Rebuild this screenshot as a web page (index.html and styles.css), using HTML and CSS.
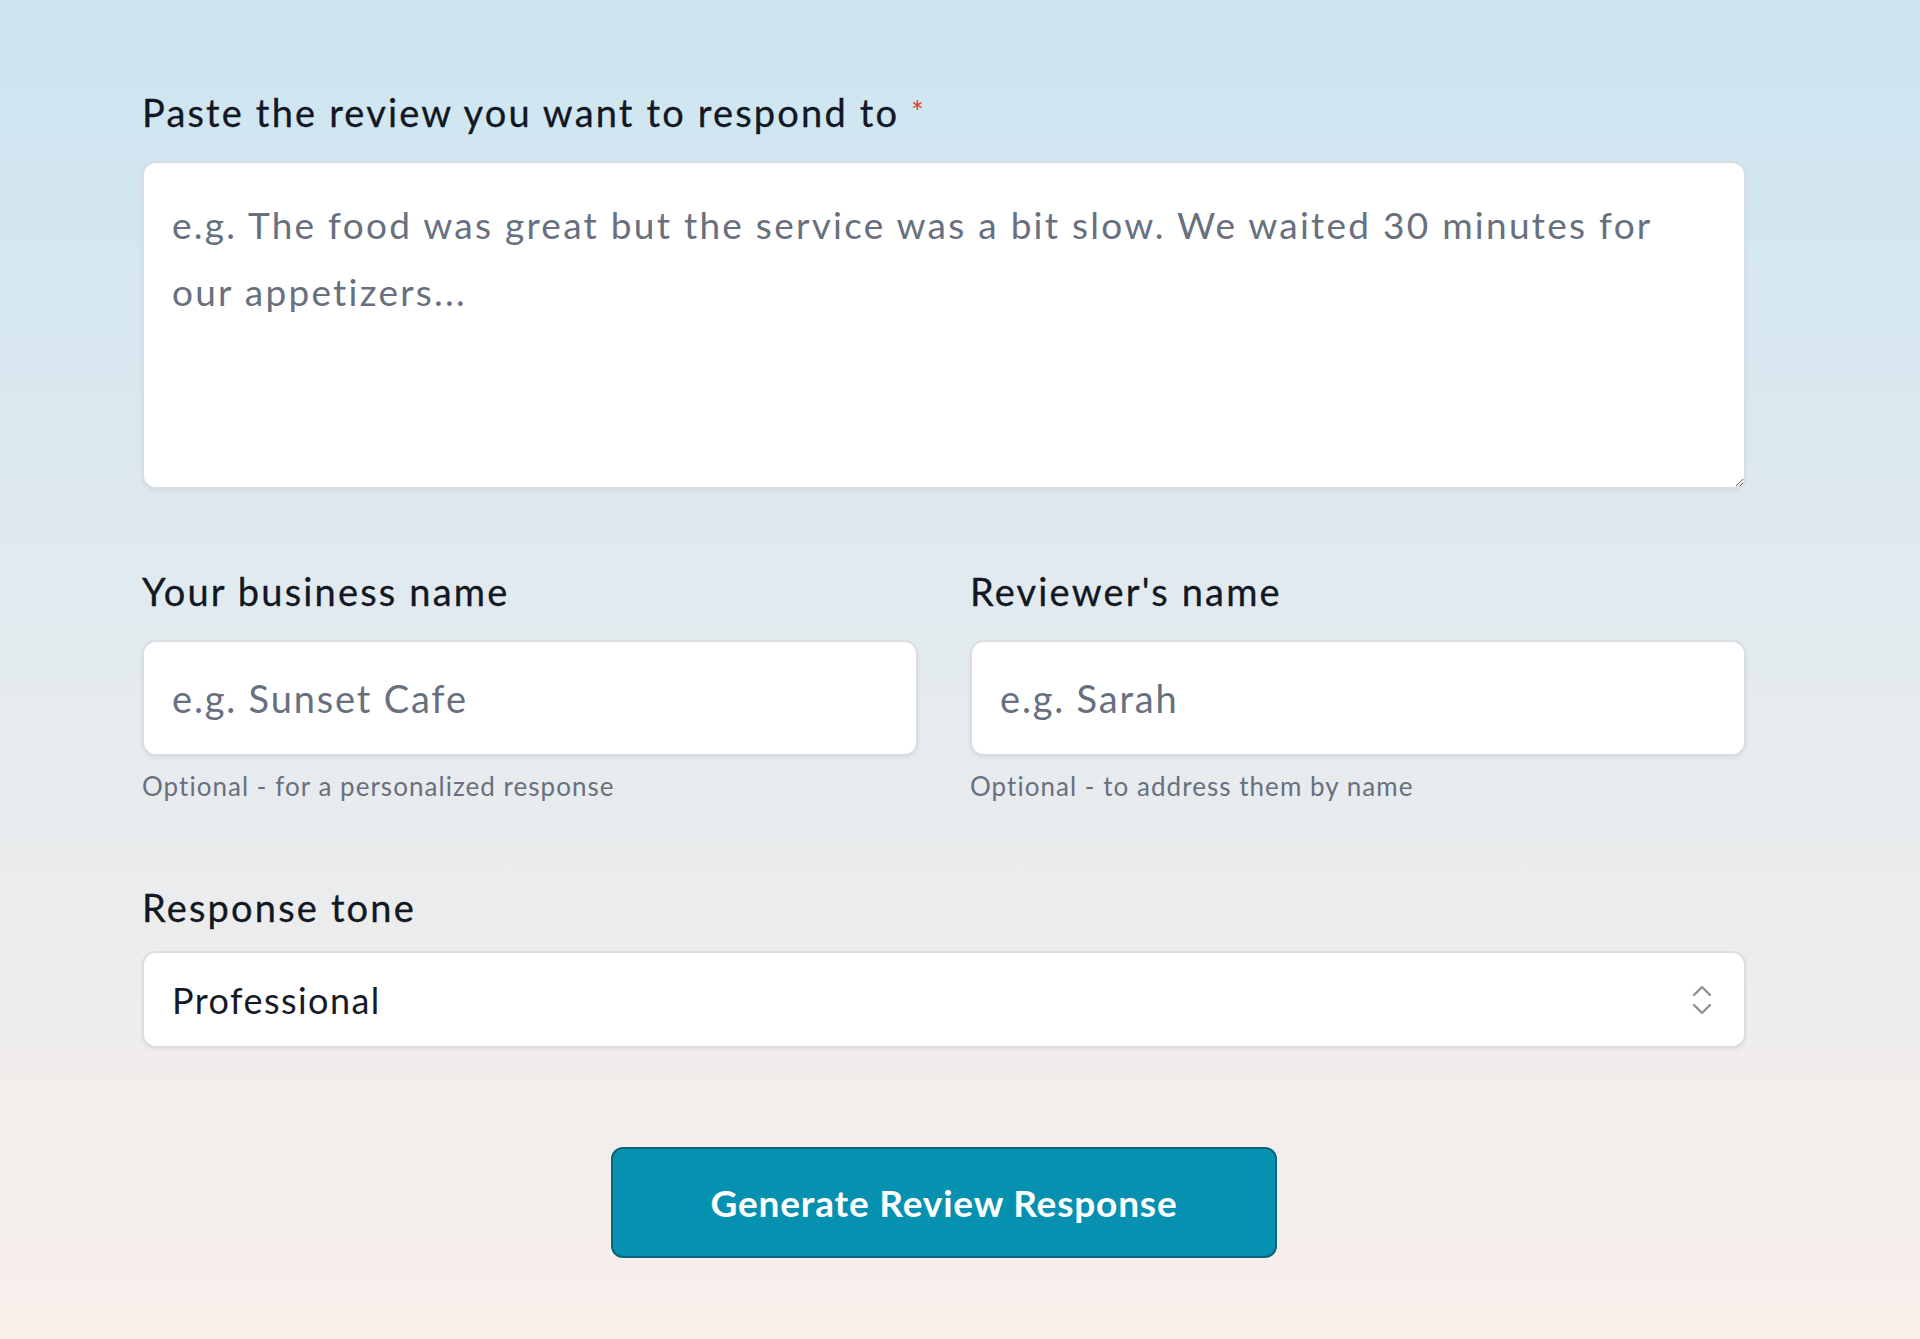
FILE: index.html
```html
<!DOCTYPE html>
<html lang="en">
<head>
    <meta charset="UTF-8">
    <meta name="viewport" content="width=device-width, initial-scale=1.0">
    <title>Review Response Generator</title>
    <link rel="stylesheet" href="styles.css">
</head>
<body>
    <form class="review-form">
        <div class="field field-review">
            <label class="field-label" for="review">Paste the review you want to respond to <span class="required">*</span></label>
            <textarea id="review" class="field-textarea" placeholder="e.g. The food was great but the service was a bit slow. We waited 30 minutes for our appetizers..."></textarea>
        </div>

        <div class="field-row">
            <div class="field">
                <label class="field-label" for="business">Your business name</label>
                <input id="business" class="field-input" type="text" placeholder="e.g. Sunset Cafe">
                <p class="field-hint">Optional - for a personalized response</p>
            </div>
            <div class="field">
                <label class="field-label" for="reviewer">Reviewer's name</label>
                <input id="reviewer" class="field-input" type="text" placeholder="e.g. Sarah">
                <p class="field-hint">Optional - to address them by name</p>
            </div>
        </div>

        <div class="field field-tone">
            <label class="field-label" for="tone">Response tone</label>
            <div class="select-wrap">
                <select id="tone" class="field-select">
                    <option>Professional</option>
                    <option>Friendly</option>
                    <option>Apologetic</option>
                </select>
                <svg class="select-icon" width="24" height="36" viewBox="0 0 24 36" fill="none" stroke="#8c9198" stroke-width="2.4" stroke-linecap="round" stroke-linejoin="round">
                    <path d="M4 13 L12 5 L20 13"/>
                    <path d="M4 23 L12 31 L20 23"/>
                </svg>
            </div>
        </div>

        <div class="actions">
            <button type="button" class="btn-generate">Generate Review Response</button>
        </div>
    </form>
</body>
</html>
```

FILE: styles.css
```css
/* === BASE === */
* {
    margin: 0;
    padding: 0;
    box-sizing: border-box;
}

body {
    font-family: Lato, "Open Sans", sans-serif;
    color: #151a26;
    min-height: 100vh;
    background: linear-gradient(180deg, #cce5f1 0%, #e6ebee 55%, #f8efea 100%);
}

/* === FORM === */
.review-form {
    width: 1604px;
    margin-left: 142px;
    padding-top: 88px;
    padding-bottom: 81px;
}

.field {
    display: flex;
    flex-direction: column;
}

.field-label {
    font-size: 38px;
    line-height: 46px;
    letter-spacing: 0.057em;
    margin-bottom: 26px;
    color: #121724;
    -webkit-text-stroke: 0.3px #121724;
}

.required {
    color: #e53935;
    font-size: 30px;
    letter-spacing: 0;
    vertical-align: 4px;
    -webkit-text-stroke: 0;
}

.field-textarea,
.field-input,
.field-select {
    font-family: inherit;
    background: #fff;
    border: 2px solid #d9dee3;
    border-radius: 14px;
    box-shadow: 0 2px 4px rgba(0,0,0,0.06);
    outline: none;
    width: 100%;
}

.field-textarea {
    height: 328px;
    padding: 28px 56px 24px 28px;
    font-size: 37px;
    line-height: 67px;
    letter-spacing: 0.061em;
    resize: vertical;
    color: #151a26;
}

.field-input {
    height: 116px;
    padding: 0 28px;
    font-size: 38px;
    letter-spacing: 0.048em;
    color: #151a26;
}

.field-textarea::placeholder,
.field-input::placeholder {
    color: #687080;
}

.field-hint {
    font-size: 26px;
    line-height: 34px;
    letter-spacing: 0.04em;
    margin-top: 13px;
    color: #687080;
}

/* === ROW OF TWO INPUTS === */
.field-row {
    display: grid;
    grid-template-columns: 1fr 1fr;
    gap: 52px;
    margin-top: 79px;
}

.field-tone {
    margin-top: 81px;
}

.field-tone .field-label {
    margin-bottom: 21px;
}

.select-wrap {
    position: relative;
}

.field-select {
    appearance: none;
    -webkit-appearance: none;
    height: 97px;
    padding: 0 28px;
    font-size: 36px;
    letter-spacing: 0.04em;
    color: #151a26;
}

.select-icon {
    position: absolute;
    right: 32px;
    top: 50%;
    transform: translateY(-50%);
    pointer-events: none;
}

/* === BUTTON === */
.actions {
    display: flex;
    justify-content: center;
    margin-top: 99px;
}

.btn-generate {
    width: 666px;
    height: 111px;
    font-family: inherit;
    font-size: 37px;
    font-weight: 700;
    letter-spacing: 0.022em;
    color: #fff;
    background: #0791b1;
    border: 2px solid #0b647a;
    border-radius: 12px;
    cursor: pointer;
}
```
